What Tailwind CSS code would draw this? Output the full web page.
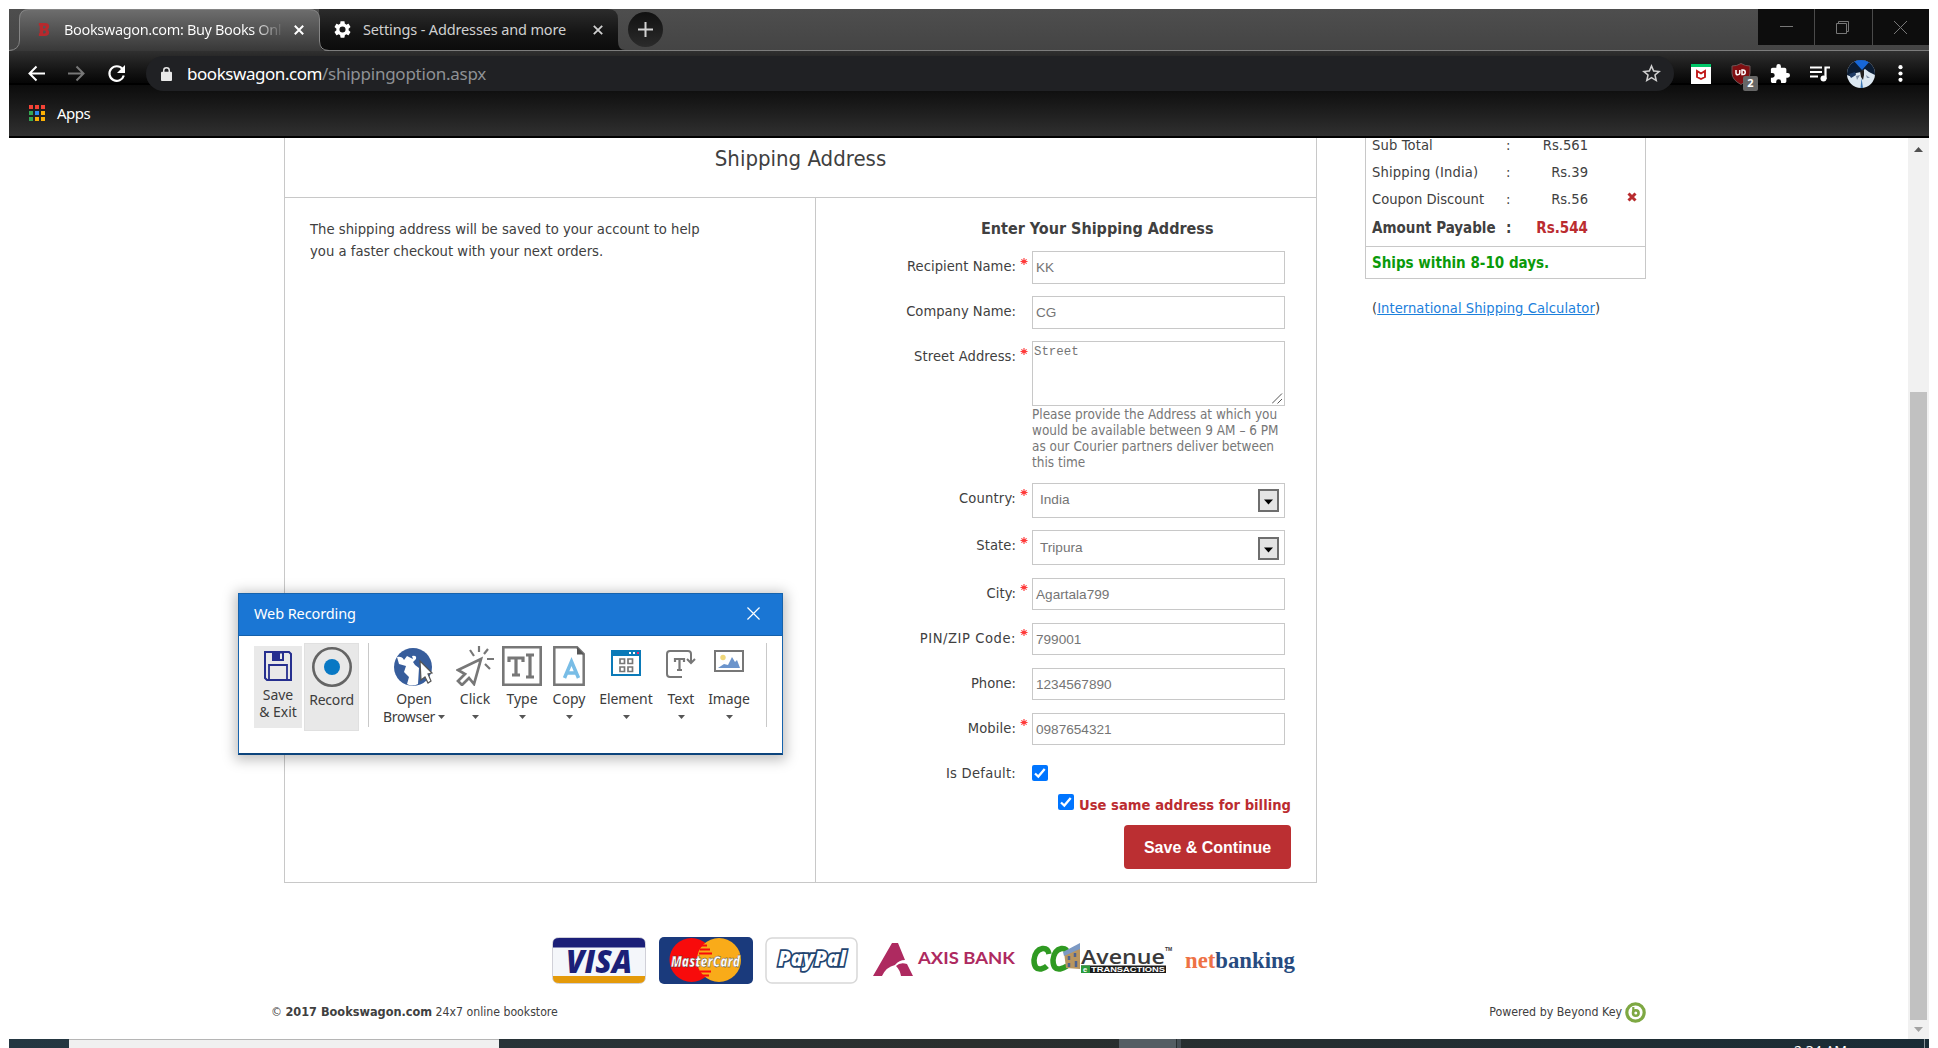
<!DOCTYPE html>
<html lang="en"><head><meta charset="utf-8"><title>Bookswagon.com</title>
<script src="https://cdn.jsdelivr.net/npm/@tailwindcss/browser@4"></script></head>
<body class="relative h-[1048px] w-[1938px] overflow-hidden bg-white px-[9px] pt-[9px] font-['DejaVu_Sans_Condensed',sans-serif] text-[14.6px] text-[#404040]">

<!-- Browser window -->
<header class="h-[129px] w-[1920px] bg-[#2c2c2c] font-['Noto_Sans',sans-serif]">
  <div class="relative flex h-[42px] items-start bg-linear-to-b from-[#4e4e4e] to-[#444]">
    <div class="absolute inset-x-0 bottom-0 h-px bg-[#7c7c7c]"></div>
    <svg class="absolute left-0 top-0 h-[42px] w-[620px]" viewBox="0 0 620 42">
      <defs>
        <linearGradient id="ta" x1="0" y1="0" x2="0" y2="1"><stop offset="0" stop-color="#6e6e6e"/><stop offset="1" stop-color="#383838"/></linearGradient>
        <linearGradient id="tb" x1="0" y1="0" x2="0" y2="1"><stop offset="0" stop-color="#2c2c2c"/><stop offset=".6" stop-color="#141414"/><stop offset="1" stop-color="#0c0c0c"/></linearGradient>
      </defs>
      <path d="M310 0H599Q609 0 609 10V32Q609 41 616 41H310Z" fill="url(#tb)"/>
      <path d="M0 42Q10 41 10 31V10Q10 0 20 0H300Q310 0 310 10V32Q310 42 320 42Z" fill="url(#ta)"/>
      <path d="M0 41.500Q10.500 41 10.500 31V10Q10.500 .5 20 .5H300Q310.500 .5 310.500 10V32Q310.500 41.500 320 41.500" fill="none" stroke="#858585"/>
    </svg>
    <div class="relative ml-[10px] flex h-[41px] w-[300px] items-center">
      <svg class="ml-[19px] h-[15px] w-[12px]" viewBox="0 0 14 17"><path fill="#b8292d" fill-rule="evenodd" d="M1 1H8Q13 1 13 5Q13 7.500 11 8.500Q13 9.500 13 12Q13 16 8 16H1V13H2V4H1ZM6 4V7.200H7.500Q9 7.200 9 5.600Q9 4 7.500 4ZM6 9.800V13.200H7.500Q9.200 13.200 9.200 11.500Q9.200 9.800 7.500 9.800Z"/></svg>
      <span class="ml-[14px] w-[220px] overflow-hidden whitespace-nowrap bg-linear-to-r from-white from-86% to-transparent to-100% bg-clip-text text-[14.5px] tracking-[-0.36px] text-transparent">Bookswagon.com: Buy Books Onl</span>
      <svg class="ml-[10px] size-[10px]" viewBox="0 0 10 10"><path d="M.8.8 9.200 9.200M9.200.8.8 9.200" stroke="#fff" stroke-width="2"/></svg>
    </div>
    <div class="relative flex h-[41px] w-[300px] items-center">
      <svg class="ml-[15px] size-[17px]" viewBox="2 2 20 20" fill="#fff"><path d="M19.140 12.940c.04-.3.06-.61.06-.94 0-.32-.02-.64-.07-.94l2.030-1.580c.18-.14.23-.41.12-.61l-1.920-3.320c-.12-.22-.37-.29-.59-.22l-2.390.96c-.5-.38-1.030-.7-1.620-.94l-.36-2.540c-.04-.24-.24-.41-.48-.41h-3.840c-.24 0-.43.17-.47.41l-.36 2.540c-.59.24-1.130.57-1.620.94l-2.390-.96c-.22-.08-.47 0-.59.22L2.740 8.870c-.12.21-.08.47.12.61l2.030 1.580c-.05.3-.09.63-.09.94s.02.64.07.94l-2.030 1.580c-.18.14-.23.41-.12.61l1.920 3.320c.12.22.37.29.59.22l2.390-.96c.5.38 1.030.7 1.620.94l.36 2.540c.05.24.24.41.48.41h3.840c.24 0 .44-.17.47-.41l.36-2.540c.59-.24 1.130-.56 1.620-.94l2.390.96c.22.08.47 0 .59-.22l1.920-3.320c.12-.22.07-.47-.12-.61zM12 15.600A3.600 3.600 0 1 1 12 8.400a3.600 3.600 0 0 1 0 7.200z"/></svg>
      <span class="ml-[12px] w-[230px] whitespace-nowrap text-[14.5px] tracking-[-0.14px] text-[#d0d0d0]">Settings - Addresses and more</span>
      <svg class="size-[10px]" viewBox="0 0 10 10"><path d="M.8.8 9.200 9.200M9.200.8.8 9.200" stroke="#d0d0d0" stroke-width="1.800"/></svg>
    </div>
    <div class="relative ml-[9px] mt-[3px] flex size-[35px] items-center justify-center rounded-full bg-linear-to-b from-[#111] to-[#2b2b2b]">
      <svg class="size-[15px]" viewBox="0 0 15 15"><path d="M7.500 0V15M0 7.500H15" stroke="#d2d2d2" stroke-width="2"/></svg>
    </div>
    <div class="relative ml-auto flex h-[36px] gap-px bg-[#4a4a4a]">
      <div class="flex w-[56px] items-center justify-center bg-[#0d0d0d]"><svg class="size-[13px]" viewBox="0 0 13 13"><path d="M0 5.500H13" stroke="#777"/></svg></div>
      <div class="flex w-[57px] items-center justify-center bg-[#0d0d0d] pr-[2px]"><svg class="size-[13px]" viewBox="0 0 13 13"><path d="M.5 2.500H10.500V12.500H.5ZM2.500 2.500V.5H12.500V10.500H10.500" fill="none" stroke="#777"/></svg></div>
      <div class="flex w-[56px] items-center justify-center bg-[#0d0d0d] pr-[2px]"><svg class="size-[13px]" viewBox="0 0 13 13"><path d="M0 0 13 13M13 0 0 13" stroke="#777"/></svg></div>
    </div>
  </div>
  <div class="relative h-[34px] border-b-2 border-black bg-linear-to-b from-[#303030] to-[#060606]">
    <div class="absolute inset-x-0 top-0 flex h-[45px] items-center">
      <svg class="ml-[19px] size-[17px]" viewBox="0 0 17 17"><path d="M17 8.500H2M8.500 1.500 1.500 8.500 8.500 15.500" fill="none" stroke="#fff" stroke-width="2"/></svg>
      <svg class="ml-[23px] size-[17px]" viewBox="0 0 17 17"><path d="M0 8.500H15M8.500 1.500 15.500 8.500 8.500 15.500" fill="none" stroke="#777" stroke-width="2"/></svg>
      <svg class="ml-[22px] size-[19px]" viewBox="0 0 19 19"><path d="M15.500 5A7.300 7.300 0 1 0 16.800 11.500" fill="none" stroke="#fff" stroke-width="2.200"/><path d="M18 1V9H10Z" fill="#fff"/></svg>
      <div class="ml-[20px] flex h-[35px] w-[1528px] items-center rounded-full bg-[#202124]">
        <svg class="ml-[15px] h-[14px] w-[11px]" viewBox="0 0 12 15"><rect y="5" width="12" height="10" rx="1" fill="#e8e8e8"/><path d="M3 6V3.500A3 2.800 0 0 1 9 3.500V6" fill="none" stroke="#e8e8e8" stroke-width="1.600"/></svg>
        <span class="ml-[15px] text-[17px] tracking-[-0.45px] text-white">bookswagon.com</span><span class="text-[17px] tracking-[-0.25px] text-[#8e9195]">/shippingoption.aspx</span>
        <svg class="ml-auto mr-[13px] size-[19px]" viewBox="2 2 20 20" fill="#cfcfcf"><path d="M22 9.240l-7.190-.62L12 2 9.190 8.630 2 9.240l5.460 4.730L5.820 21 12 17.270 18.180 21l-1.630-7.030L22 9.240zM12 15.400l-3.760 2.270 1-4.280-3.320-2.880 4.380-.38L12 6.100l1.710 4.040 4.380.38-3.320 2.880 1 4.280L12 15.400z"/></svg>
      </div>
      <svg class="ml-[17px] size-[20px]" viewBox="0 0 20 20"><path d="M0 0H20V20H0Z" fill="#fff"/><path d="M0 0H20V3H0Z" fill="#00c767"/><path d="M6 7V13L10 15 14 13V7L10 9.500Z" fill="none" stroke="#c01818" stroke-width="1.900"/></svg>
      <div class="relative ml-[20px] h-[22px] w-[20px]">
        <svg class="h-[22px] w-[20px]" viewBox="0 0 20 22"><path d="M10 .5Q14 3 19 3V10Q19 17 10 21.500Q1 17 1 10V3Q6 3 10 .5Z" fill="#800f12" stroke="#6a5555"/><path d="M5 7V10Q5 11.800 6.800 11.800T8.800 10V7M11 7V11.500H12A2.200 2.200 0 0 0 12 7Z" fill="none" stroke="#fff" stroke-width="1.500"/></svg>
        <span class="absolute left-[12px] top-[13px] flex h-[15px] w-[15px] items-center justify-center rounded-[2px] bg-[#666] text-[11px] font-bold text-white">2</span>
      </div>
      <svg class="ml-[19px] size-[20px]" viewBox="1 1 22 22" fill="#fff"><path d="M20.500 11H19V7c0-1.100-.9-2-2-2h-4V3.500a2.500 2.500 0 0 0-5 0V5H4c-1.100 0-2 .9-2 2v3.800h1.500a2.700 2.700 0 0 1 0 5.400H2V20c0 1.100.9 2 2 2h3.800v-1.500a2.700 2.700 0 0 1 5.400 0V22H17c1.100 0 2-.9 2-2v-4h1.500a2.500 2.500 0 0 0 0-5z"/></svg>
      <svg class="ml-[20px] h-[16px] w-[20px]" viewBox="0 0 20 16"><path d="M0 1.500H12M0 6H12M0 10.500H8" stroke="#fff" stroke-width="2"/><path d="M15.500 13V1.500H20" fill="none" stroke="#fff" stroke-width="2.200"/><circle cx="13.500" cy="12.500" r="3" fill="#fff"/></svg>
      <svg class="ml-[17px] size-[28px]" viewBox="0 0 28 28"><defs><clipPath id="av"><circle cx="14" cy="14" r="14"/></clipPath></defs><g clip-path="url(#av)"><path d="M0 0H28V28H0Z" fill="#dde8f2"/><path d="M0 0H28V15L22 12 18 9 14 12 9 13 5 17 0 15Z" fill="#0b1c33"/><path d="M6 0H24L15 10Z" fill="#1767d8"/><path d="M2 14 8 12 9 15 4 18Z" fill="#203c66"/><path d="M13 11 17 10 17 15 16 20 14 17Z" fill="#23201f"/><path d="M9 16 13 15 10 20ZM19 15 23 18 20 18Z" fill="#7f90a8"/><path d="M14.500 18 16 28H13.500Z" fill="#3e78b5"/></g></svg>
      <svg class="ml-[23px] h-[17px] w-[5px]" viewBox="0 0 5 17" fill="#fff"><circle cx="2.500" cy="2.200" r="2.100"/><circle cx="2.500" cy="8.500" r="2.100"/><circle cx="2.500" cy="14.800" r="2.100"/></svg>
    </div>
  </div>
  <div class="flex h-[53px] items-center border-b-2 border-black bg-linear-to-b from-[#0c0c0c] to-[#303030] pl-[20px] pt-[5px]">
    <div class="grid grid-cols-3 gap-[2px]">
      <i class="size-[4px] bg-[#f44336]"></i><i class="size-[4px] bg-[#f44336]"></i><i class="size-[4px] bg-[#f44336]"></i>
      <i class="size-[4px] bg-[#34a853]"></i><i class="size-[4px] bg-[#2b8cf0]"></i><i class="size-[4px] bg-[#fbb006]"></i>
      <i class="size-[4px] bg-[#34a853]"></i><i class="size-[4px] bg-[#fbb006]"></i><i class="size-[4px] bg-[#fbb006]"></i>
    </div>
    <span class="ml-[12px] text-[15px] tracking-[-0.5px] text-white">Apps</span>
  </div>
</header>

<!-- Page -->
<div class="flex h-[901px] w-[1920px]">
 <main class="w-[1899px] pl-[262px]">
  <div class="flex h-[745px] pl-[13px]">
   <section class="h-[745px] w-[1033px] border-x border-b border-[#c8c8c8]">
    <h1 class="h-[60px] border-b border-[#c8c8c8] text-center text-[22px] leading-[42px]">Shipping Address</h1>
    <div class="flex h-[684px]">
     <p class="w-[530px] whitespace-nowrap pl-[25px] pt-[20px] text-[14.7px] leading-[22px]">The shipping address will be saved to your account to help<br>you a faster checkout with your next orders.</p>
     <form class="w-[501px] border-l border-[#c8c8c8] pl-px">
      <h2 class="h-[53px] pl-[164px] pt-[19px] text-[16px] font-bold leading-[24px]">Enter Your Shipping Address</h2>
      <div class="flex h-[45px] items-start"><label class="w-[199px] text-right leading-[29px] tracking-[0.04px]">Recipient Name:</label><span class="flex w-[16px] pl-[4px] pt-[7px]"><svg class="h-[7px] w-[8px]" viewBox="0 0 8 8"><path d="M4 0V8M0 4H8M1 1.500 7 6.500M7 1.500 1 6.500" stroke="#ff3b3b" stroke-width="1.300"/></svg></span><div class="h-[33px] w-[253px] border border-[#c8c8c8] pl-[3px] font-['Liberation_Sans',sans-serif] text-[13.6px] leading-[31px] text-[#757575]">KK</div></div>
      <div class="flex h-[45px] items-start"><label class="w-[199px] text-right leading-[29px]">Company Name:</label><span class="w-[16px]"></span><div class="h-[33px] w-[253px] border border-[#c8c8c8] pl-[3px] font-['Liberation_Sans',sans-serif] text-[13.6px] leading-[31px] text-[#757575]">CG</div></div>
      <div class="flex h-[142px] items-start"><label class="w-[199px] text-right leading-[29px] tracking-[0.08px]">Street Address:</label><span class="flex w-[16px] pl-[4px] pt-[7px]"><svg class="h-[7px] w-[8px]" viewBox="0 0 8 8"><path d="M4 0V8M0 4H8M1 1.500 7 6.500M7 1.500 1 6.500" stroke="#ff3b3b" stroke-width="1.300"/></svg></span>
       <div class="w-[260px]">
        <div class="flex h-[65px] w-[253px] justify-between border border-[#c8c8c8] pl-px font-['Liberation_Mono',monospace] text-[12.4px] leading-[21px] text-[#757575]">Street<svg class="mb-[1px] mr-[1px] size-[11px] self-end" viewBox="0 0 11 11"><path d="M0 10.500 10 .5M5.500 10.500 10 6" stroke="#555"/></svg></div>
        <p class="whitespace-nowrap pt-px text-[13.45px] leading-[16px] text-[#777]">Please provide the Address at which you<br>would be available between 9 AM – 6 PM<br>as our Courier partners deliver between<br>this time</p>
       </div></div>
      <div class="flex h-[47px] items-start"><label class="w-[199px] text-right leading-[29px] tracking-[0.2px]">Country:</label><span class="flex w-[16px] pl-[4px] pt-[6px]"><svg class="h-[7px] w-[8px]" viewBox="0 0 8 8"><path d="M4 0V8M0 4H8M1 1.500 7 6.500M7 1.500 1 6.500" stroke="#ff3b3b" stroke-width="1.300"/></svg></span><div class="flex h-[35px] w-[253px] items-start justify-between border border-[#c8c8c8] pl-[7px] pr-[5px] font-['Liberation_Sans',sans-serif] text-[13.6px] leading-[31px] text-[#757575]">India<svg class="mt-[5px] h-[23px] w-[21px]" viewBox="0 0 21 23"><path d="M1 1H20V22H1Z" fill="#e4e4e4" stroke="#6e6e6e" stroke-width="2"/><path d="M6 10.500H15L10.500 15.500Z" fill="#000"/></svg></div></div>
      <div class="flex h-[48px] items-start"><label class="w-[199px] text-right leading-[29px] tracking-[0.1px]">State:</label><span class="flex w-[16px] pl-[4px] pt-[7px]"><svg class="h-[7px] w-[8px]" viewBox="0 0 8 8"><path d="M4 0V8M0 4H8M1 1.500 7 6.500M7 1.500 1 6.500" stroke="#ff3b3b" stroke-width="1.300"/></svg></span><div class="flex h-[35px] w-[253px] items-start justify-between border border-[#c8c8c8] pl-[7px] pr-[5px] font-['Liberation_Sans',sans-serif] text-[13.6px] leading-[33px] text-[#757575]">Tripura<svg class="mt-[6px] h-[23px] w-[21px]" viewBox="0 0 21 23"><path d="M1 1H20V22H1Z" fill="#e4e4e4" stroke="#6e6e6e" stroke-width="2"/><path d="M6 10.500H15L10.500 15.500Z" fill="#000"/></svg></div></div>
      <div class="flex h-[45px] items-start"><label class="w-[199px] text-right leading-[29px] tracking-[0.1px]">City:</label><span class="flex w-[16px] pl-[4px] pt-[6px]"><svg class="h-[7px] w-[8px]" viewBox="0 0 8 8"><path d="M4 0V8M0 4H8M1 1.500 7 6.500M7 1.500 1 6.500" stroke="#ff3b3b" stroke-width="1.300"/></svg></span><div class="h-[32px] w-[253px] border border-[#c8c8c8] pl-[3px] font-['Liberation_Sans',sans-serif] text-[13.6px] leading-[31px] text-[#757575]">Agartala799</div></div>
      <div class="flex h-[45px] items-start"><label class="w-[199px] text-right leading-[29px] tracking-[0.55px]">PIN/ZIP Code:</label><span class="flex w-[16px] pl-[4px] pt-[6px]"><svg class="h-[7px] w-[8px]" viewBox="0 0 8 8"><path d="M4 0V8M0 4H8M1 1.500 7 6.500M7 1.500 1 6.500" stroke="#ff3b3b" stroke-width="1.300"/></svg></span><div class="h-[32px] w-[253px] border border-[#c8c8c8] pl-[3px] font-['Liberation_Sans',sans-serif] text-[13.6px] leading-[31px] text-[#757575]">799001</div></div>
      <div class="flex h-[45px] items-start"><label class="w-[199px] text-right leading-[29px]">Phone:</label><span class="w-[16px]"></span><div class="h-[32px] w-[253px] border border-[#c8c8c8] pl-[3px] font-['Liberation_Sans',sans-serif] text-[13.6px] leading-[31px] text-[#757575]">1234567890</div></div>
      <div class="flex h-[45px] items-start"><label class="w-[199px] text-right leading-[29px] tracking-[0.1px]">Mobile:</label><span class="flex w-[16px] pl-[4px] pt-[6px]"><svg class="h-[7px] w-[8px]" viewBox="0 0 8 8"><path d="M4 0V8M0 4H8M1 1.500 7 6.500M7 1.500 1 6.500" stroke="#ff3b3b" stroke-width="1.300"/></svg></span><div class="h-[32px] w-[253px] border border-[#c8c8c8] pl-[3px] font-['Liberation_Sans',sans-serif] text-[13.6px] leading-[31px] text-[#757575]">0987654321</div></div>
      <div class="flex h-[36px] items-start"><label class="w-[199px] text-right leading-[29px] tracking-[0.25px]">Is Default:</label><svg class="ml-[16px] mt-[7px] size-[16px]" viewBox="0 0 16 16"><rect width="16" height="16" rx="2" fill="#0075ff"/><path d="M3 8.500 6.300 11.500 12.700 4" fill="none" stroke="#fff" stroke-width="2.300"/></svg></div>
      <div class="flex h-[31px] items-start pl-[241px]"><svg class="size-[16px]" viewBox="0 0 16 16"><rect width="16" height="16" rx="2" fill="#0075ff"/><path d="M3 8.500 6.300 11.500 12.700 4" fill="none" stroke="#fff" stroke-width="2.300"/></svg><span class="ml-[5px] whitespace-nowrap font-bold leading-[21px] tracking-[0.04px] text-[#bb2c30]">Use same address for billing</span></div>
      <div class="ml-[307px] flex h-[44px] w-[167px] items-center justify-center rounded-[4px] bg-[#bb2f32] pt-px font-['Liberation_Sans',sans-serif] text-[16px] font-bold text-white">Save &amp; Continue</div>
     </form>
    </div>
   </section>
   <aside class="ml-[48px] w-[281px]">
    <div class="h-[141px] overflow-hidden border-x border-b border-[#c8c8c8]">
     <div class="flex h-[109px] flex-col border-b border-[#c8c8c8] pl-[6px]">
      <div class="-mt-[7px] flex h-[27px] shrink-0 items-center"><span class="w-[134px] tracking-[0.15px]">Sub Total</span><span class="w-[10px]">:</span><span class="w-[72px] text-right">Rs.561</span></div>
      <div class="flex h-[27px] shrink-0 items-center"><span class="w-[134px] tracking-[0.15px]">Shipping (India)</span><span class="w-[10px]">:</span><span class="w-[72px] text-right">Rs.39</span></div>
      <div class="flex h-[27px] shrink-0 items-center"><span class="w-[134px]">Coupon Discount</span><span class="w-[10px]">:</span><span class="w-[72px] text-right">Rs.56</span><svg class="mb-[4px] ml-[39px] size-[10px]" viewBox="0 0 10 10"><path d="M1.500 1.500 8.500 8.500M8.500 1.500 1.500 8.500" stroke="#b92b2e" stroke-width="3"/></svg></div>
      <div class="flex h-[32px] shrink-0 items-center text-[15px] font-bold"><span class="w-[134px] whitespace-nowrap">Amount Payable</span><span class="w-[10px]">:</span><span class="w-[72px] text-right text-[#bb2c30]">Rs.544</span></div>
     </div>
     <p class="pl-[6px] text-[15px] font-bold leading-[32px] text-[#0a9a0a]">Ships within 8-10 days.</p>
    </div>
    <p class="whitespace-nowrap pl-[7px] pt-[18px] leading-[22px] tracking-[0.05px]">(<span class="text-[#1b80dc] underline">International Shipping Calculator</span>)</p>
   </aside>
  </div>

  <div class="flex h-[44px] items-start pl-[281px] pt-[54px]">
   <svg class="h-[47px] w-[95px] shrink-0" viewBox="0 0 95 47"><rect x=".5" y=".5" width="93" height="46" rx="6" fill="#f4f6fa" stroke="#d0d0d8"/><path d="M1 10.500V6Q1 1 7 1H87Q93 1 93 6V10.500Z" fill="#1b1f78"/><path d="M1 39V41Q1 46 7 46H87Q93 46 93 41V39Z" fill="#e49a0a"/><text x="14" y="36" textLength="66" lengthAdjust="spacingAndGlyphs" font-family="Open Sans" font-weight="800" font-style="italic" font-size="31" fill="#1b1f78">VISA</text></svg>
   <svg class="ml-[12px] h-[47px] w-[94px] shrink-0" viewBox="0 0 94 47"><rect width="94" height="47" rx="5" fill="#1a3a7c"/><circle cx="32.500" cy="23" r="22" fill="#f80b0b"/><circle cx="60" cy="23" r="22" fill="#f9ab19"/><path d="M42 8.500H48M41 12.500H51M40 16.500H53M41 34.500H52M43 38.500H50" stroke="#f80b0b" stroke-width="1.800"/><text x="12" y="29.500" textLength="69" lengthAdjust="spacingAndGlyphs" font-family="Open Sans" font-weight="800" font-style="italic" font-size="16.500" fill="#fff" stroke="#333" stroke-width=".4">MasterCard</text></svg>
   <svg class="ml-[12px] h-[47px] w-[94px] shrink-0" viewBox="0 0 94 47"><rect x="1" y="1" width="91" height="45" rx="6" fill="#fff" stroke="#d8d8d8" stroke-width="1.500"/><text x="13" y="29" textLength="68" lengthAdjust="spacingAndGlyphs" font-family="Open Sans" font-weight="800" font-style="italic" font-size="21" fill="#fff" stroke="#1f4470" stroke-width="3.500" paint-order="stroke">PayPal</text></svg>
   <svg class="ml-[13px] h-[47px] w-[146px] shrink-0" viewBox="0 0 146 47"><path d="M20 6H26L33 23Q27 23 23 28Q14 30 10 39H1ZM24 29Q28 25 35 27L41 39H29Q28 33 24 29Z" fill="#ae2a60"/><text x="46" y="27" textLength="97" lengthAdjust="spacingAndGlyphs" font-family="Lato" font-weight="700" font-size="17.500" fill="#ae2a60">AXIS BANK</text></svg>
   <svg class="ml-[12px] h-[47px] w-[146px] shrink-0" viewBox="0 0 146 47"><g fill="none" stroke="#2f9a22" stroke-width="5.500"><path d="M19 17Q18 11 12.500 11.500Q5 13 4 23Q4 33 11 32Q15 31 17 29"/><path d="M38 17Q37 11 31.500 11.500Q24 13 23 23Q23 33 30 32Q34 31 37 29"/></g><path d="M34 15 50 7V32L36 31Z" fill="#b8955f"/><path d="M33 15 50 6V12L34 19Z" fill="#7c99c4"/><path d="M39 19V23M45 16V20M39 26V30M46 24V30" stroke="#4c6290" stroke-width="2.500"/><text x="51" y="26.500" textLength="84" lengthAdjust="spacingAndGlyphs" font-family="Open Sans" font-weight="600" font-size="19" fill="#3a3a3a">Avenue</text><text x="135" y="14" font-family="Liberation Sans" font-size="5" font-weight="700" fill="#333">TM</text><path d="M51 28.500H136V36H51Z" fill="#1c1c1c"/><path d="M51 28.500H60V36H51Z" fill="#2b9a3b"/><text x="53" y="35" font-family="Liberation Sans" font-weight="700" font-size="7.500" fill="#fff">e</text><text x="61" y="35" textLength="74" lengthAdjust="spacingAndGlyphs" font-family="Liberation Sans" font-weight="700" font-size="7" fill="#fff">TRANSACTIONS</text></svg>
   <svg class="ml-[8px] h-[47px] w-[112px] shrink-0" viewBox="0 0 112 47"><text x="1" y="30.500" textLength="110" lengthAdjust="spacingAndGlyphs" font-family="Liberation Serif" font-weight="700" font-size="23" fill="#274b80"><tspan fill="#ee7145">net</tspan>banking</text></svg>
  </div>
  <footer class="flex h-[112px] w-[1375px] items-center pt-[38px] text-[12.2px]">
   <span class="whitespace-nowrap">© <b class="text-[12.6px]">2017 Bookswagon.com</b> 24x7 online bookstore</span>
   <span class="ml-auto whitespace-nowrap text-[12.3px]">Powered by Beyond Key</span>
   <svg class="ml-[3px] h-[21px] w-[21px]" viewBox="0 0 21 21"><circle cx="10.500" cy="10.500" r="8.700" fill="#fff" stroke="#7ea843" stroke-width="3.200"/><path d="M8.300 5V12" stroke="#7ea843" stroke-width="2.200"/><circle cx="10.800" cy="11" r="2.800" fill="#fff" stroke="#7ea843" stroke-width="2.600"/></svg>
  </footer>
 </main>
 <div class="flex w-[21px] flex-col items-center bg-[#f1f1f1]">
  <svg class="mt-[9px] h-[5px] w-[9px]" viewBox="0 0 9 5"><path d="M0 5 4.500 0 9 5Z" fill="#505050"/></svg>
  <div class="mt-[240px] h-[628px] w-[17px] bg-[#c1c1c1]"></div>
  <svg class="mt-[7px] h-[5px] w-[9px]" viewBox="0 0 9 5"><path d="M0 0 4.500 5 9 0Z" fill="#a3a3a3"/></svg>
 </div>
</div>

<!-- Desktop taskbar -->
<div class="flex h-[9px] w-[1920px] overflow-hidden bg-linear-to-r from-[#243742] via-[#2b2f2e] to-[#1a2c36]">
 <div class="ml-[60px] w-[430px] border-t border-[#b5b5b5] bg-[#f0f0f0]"></div>
 <div class="ml-[620px] w-[57px] bg-[#545d63]"></div><div class="ml-px w-[4px] bg-[#454e54]"></div>
 <div class="ml-[613px] mt-[3px] h-[18px] whitespace-nowrap font-['Noto_Sans',sans-serif] text-[14px] leading-[18px] text-white">2:34 AM</div>
 <div class="ml-auto mr-[4px] w-px bg-[#8a959b]"></div>
</div>

<!-- Floating recorder window -->
<div class="absolute left-[238px] top-[593px] flex h-[162px] w-[545px] flex-col border border-b-2 border-[#1663ad] border-b-[#0c447c] bg-white font-['Noto_Sans',sans-serif] text-[14px] leading-[17px] text-[#3c3c3c] shadow-[0_2px_12px_3px_rgba(0,0,0,0.25)]">
 <div class="flex h-[42px] items-center border-b border-[#1460aa] bg-[#1a76d4] pb-[2px] pl-[15px] pr-[22px] text-[14.5px] tracking-[-0.1px] text-white">Web Recording<svg class="ml-auto size-[13px]" viewBox="0 0 14 14"><path d="M.5.5 13.500 13.500M13.500.5.5 13.500" stroke="#fff" stroke-width="1.300"/></svg></div>
 <div class="flex items-start pl-[15px] pt-[7px] text-center">
  <div class="mt-[3px] flex h-[82px] w-[48px] flex-col items-center whitespace-nowrap bg-[#e9e9e9] pt-[5px]"><svg class="mb-[5px] h-[30px] w-[28px]" viewBox="0 0 28 30"><path d="M1 1H25L27 3V29H3L1 27Z" fill="none" stroke="#262f8f" stroke-width="2"/><path d="M8 1H20V10H8Z" fill="#262f8f"/><path d="M16 2.500H18V8H16Z" fill="#e9e9e9"/><path d="M5 29V14H23V29" fill="none" stroke="#262f8f" stroke-width="1.800"/></svg><span class="leading-[16.500px]"><span class="block leading-[17px]">Save</span><span class="block leading-[17px]">&amp; Exit</span></span></div>
  <div class="ml-[2px] flex h-[88px] w-[55px] flex-col items-center border border-[#e0e0e0] bg-[#e8e8e8] pt-[3px]"><svg class="size-[40px]" viewBox="0 0 40 40"><circle cx="20" cy="20" r="18.700" fill="none" stroke="#646464" stroke-width="2.600"/><circle cx="20" cy="20" r="8" fill="#0878c4"/></svg><span class="mt-[4px] tracking-[-0.2px]">Record</span></div>
  <div class="ml-[9px] h-[84px] w-px bg-[#c9c9c9]"></div>
  <div class="ml-[13px] flex w-[64px] flex-col items-center pt-[4px]"><svg class="h-[40px] w-[40px]" viewBox="0 0 40 40"><circle cx="19" cy="20" r="19" fill="#375d9c"/><path d="M3 10Q8 9 10 13L13 9 19 12 18 9Q23 8 22 12L19 15 21 18 25 21 24 37Q18 40 13 37L15 30 10 25 12 19 5 17Z" fill="#fff"/><path d="M26 14 38 26 34 27 37 34 34 36 31 30 27 33Z" fill="#fff" stroke="#555" stroke-width="1.200"/></svg><span class="mt-[3px] leading-[18px] tracking-[-0.2px]">Open</span><span class="flex items-center whitespace-nowrap tracking-[-0.3px]">Browser<svg class="ml-[3px] h-[4px] w-[7px]" viewBox="0 0 7 4"><path d="M0 0H7L3.500 4Z" fill="#555"/></svg></span></div>
  <div class="ml-[11px] flex w-[36px] flex-col items-center pt-[3px]"><svg class="h-[40px] w-[38px]" viewBox="0 0 38 40"><path d="M25 13 2 24 9 28 2 35 6 39 13 32 18 38Z" fill="none" stroke="#777" stroke-width="2.700"/><path d="M14 4 18 10M23 0V6M32 3 28 8M31 13H38M29 18 34 23" stroke="#777" stroke-width="2.200"/></svg><span class="mt-[4px]">Click</span><svg class="mt-[8px] h-[4px] w-[7px]" viewBox="0 0 7 4"><path d="M0 0H7L3.500 4Z" fill="#555"/></svg></div>
  <div class="ml-[8px] flex w-[42px] flex-col items-center pt-[3px]"><svg class="size-[40px]" viewBox="0 0 40 40"><path d="M1.300 1.300H38.700V38.700H1.300Z" fill="none" stroke="#777" stroke-width="2.600"/><path d="M7 16V12H21V16M14 12V29M10 29H18M24 9H32M28 9V31M24 31H32" fill="none" stroke="#777" stroke-width="3.200"/></svg><span class="mt-[4px]">Type</span><svg class="mt-[8px] h-[4px] w-[7px]" viewBox="0 0 7 4"><path d="M0 0H7L3.500 4Z" fill="#555"/></svg></div>
  <div class="ml-[6px] flex w-[40px] flex-col items-center pt-[3px]"><svg class="h-[40px] w-[32px]" viewBox="0 0 32 40"><path d="M1.300 1.300H24L30.700 8V38.700H1.300Z" fill="none" stroke="#777" stroke-width="2.500"/><path d="M24 1V8.500H31Z" fill="#555"/><path d="M11.500 32 18.500 15.500 25.500 32M14 27H23" fill="none" stroke="#79bde6" stroke-width="3.500"/></svg><span class="mt-[4px]">Copy</span><svg class="mt-[8px] h-[4px] w-[7px]" viewBox="0 0 7 4"><path d="M0 0H7L3.500 4Z" fill="#555"/></svg></div>
  <div class="ml-[9px] flex w-[56px] flex-col items-center pt-[7px]"><svg class="h-[26px] w-[30px]" viewBox="0 0 30 26"><path d="M1 1H29V25H1Z" fill="#fff" stroke="#0b7ab8" stroke-width="2"/><path d="M0 0H30V6H0Z" fill="#0b7ab8"/><path d="M18 3H20M22 3H24" stroke="#fff" stroke-width="2"/><path d="M26 3H28" stroke="#f26" stroke-width="2"/><path d="M9 9H13.500V13.500H9ZM17 9H21.500V13.500H17ZM9 17H13.500V21.500H9ZM17 17H21.500V21.500H17Z" fill="none" stroke="#777" stroke-width="1.700"/></svg><span class="mt-[14px] tracking-[-0.1px]">Element</span><svg class="mt-[8px] h-[4px] w-[7px]" viewBox="0 0 7 4"><path d="M0 0H7L3.500 4Z" fill="#555"/></svg></div>
  <div class="ml-[7px] flex w-[40px] flex-col items-center pt-[7px]"><svg class="h-[28px] w-[30px]" viewBox="0 0 30 28"><path d="M16 27H4Q1 27 1 24V4Q1 1 4 1H22Q25 1 25 4V12M21 9 25 13 29 9" fill="none" stroke="#777" stroke-width="2"/><path d="M9 12V9H18V12M13.500 9V20M11 20H16" fill="none" stroke="#777" stroke-width="2.200"/></svg><span class="mt-[12px]">Text</span><svg class="mt-[8px] h-[4px] w-[7px]" viewBox="0 0 7 4"><path d="M0 0H7L3.500 4Z" fill="#555"/></svg></div>
  <div class="ml-[5px] flex w-[46px] flex-col items-center pt-[7px]"><svg class="h-[22px] w-[30px]" viewBox="0 0 30 22"><path d="M1 1H29V21H1Z" fill="#fff" stroke="#777" stroke-width="2"/><circle cx="9" cy="7.500" r="2.700" fill="#f0d779"/><path d="M4 18 10 14 14 15 18 7 21 12 23 10 26 18Z" fill="#6b94cc"/></svg><span class="mt-[18px] tracking-[-0.1px]">Image</span><svg class="mt-[8px] h-[4px] w-[7px]" viewBox="0 0 7 4"><path d="M0 0H7L3.500 4Z" fill="#555"/></svg></div>
  <div class="ml-[14px] h-[84px] w-px bg-[#c9c9c9]"></div>
 </div>
</div>
</body></html>
